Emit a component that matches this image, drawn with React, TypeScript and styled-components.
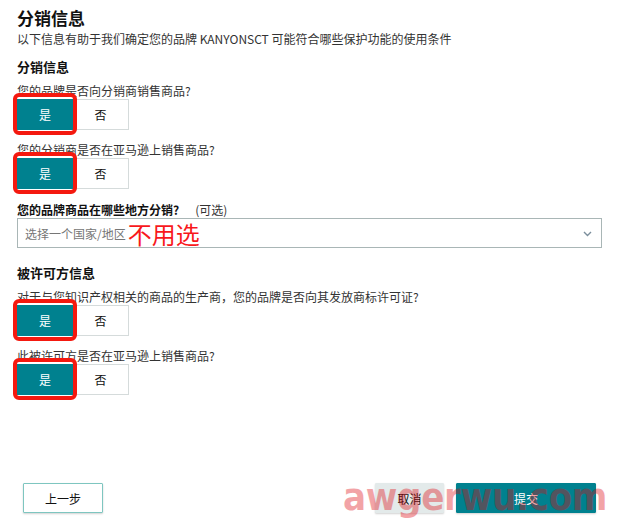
import React from "react";
import styled, { createGlobalStyle } from "styled-components";

const Global = createGlobalStyle`
  html, body { margin: 0; padding: 0; background: #fff; }
  body { font-family: "Noto Sans CJK SC", "Noto Sans", sans-serif; color: #111; }
`;

const Page = styled.div`
  position: relative;
  width: 620px;
  height: 529px;
  box-sizing: border-box;
  display: flex;
  flex-direction: column;
  padding: 7px 18px 0 17px;
`;

const Title = styled.h1`
  margin: 0;
  font-size: 17px;
  line-height: 22px;
  font-weight: 700;
  color: #111;
`;

const Subtitle = styled.p`
  margin: 2px 0 0;
  font-size: 12px;
  line-height: 16px;
  color: #333;
`;

const SectionHeading = styled.h2<{ $top: number }>`
  margin: ${(p) => p.$top}px 0 0;
  font-size: 13px;
  line-height: 18px;
  font-weight: 700;
  color: #111;
`;

const Question = styled.div<{ $top: number }>`
  margin-top: ${(p) => p.$top}px;
  font-size: 12px;
  line-height: 16px;
  color: #333;
`;

const Toggle = styled.div`
  display: flex;
  width: 112px;
`;

const ToggleButton = styled.div<{ $active?: boolean; $marked?: boolean }>`
  position: relative;
  width: 56px;
  height: 31px;
  box-sizing: border-box;
  display: flex;
  align-items: center;
  justify-content: center;
  font-size: 12px;
  background: ${(p) => (p.$active ? "#00818f" : "#fff")};
  color: ${(p) => (p.$active ? "#fff" : "#111")};
  border: 1px solid ${(p) => (p.$active ? "#00818f" : "#d5dbdb")};
  border-left-width: ${(p) => (p.$active ? 1 : 0)}px;
  z-index: ${(p) => (p.$marked ? 2 : 1)};
  &::after {
    content: "";
    display: ${(p) => (p.$marked ? "block" : "none")};
    position: absolute;
    top: -7px;
    left: -5px;
    right: -5px;
    bottom: -6px;
    border: 4px solid #f4190f;
    border-radius: 6px;
  }
`;

const Label = styled.div`
  margin-top: 13px;
  font-size: 12px;
  line-height: 16px;
  color: #111;
  display: flex;
  gap: 16px;
`;

const LabelMain = styled.span`
  font-weight: 700;
`;

const LabelNote = styled.span`
  color: #333;
`;

const Select = styled.div`
  position: relative;
  height: 30px;
  box-sizing: border-box;
  border: 1px solid #a9b6b6;
  display: flex;
  align-items: center;
  padding: 0 7px;
  gap: 2px;
`;

const Placeholder = styled.span`
  font-size: 12px;
  color: #767676;
`;

const Note = styled.span`
  font-size: 24px;
  line-height: 24px;
  color: #f8181c;
  margin-top: 1px;
`;

const Chevron = styled.svg`
  position: absolute;
  right: 9px;
  top: 12px;
`;

const Footer = styled.div`
  margin-top: auto;
  margin-left: 6px;
  margin-right: 6px;
  margin-bottom: 16px;
  display: flex;
  align-items: center;
  gap: 12px;
`;

const Spacer = styled.div`
  flex: 1;
`;

const FooterButton = styled.button<{ $variant: "outline" | "gray" | "primary"; $w: number }>`
  width: ${(p) => p.$w}px;
  height: 30px;
  box-sizing: border-box;
  font-family: inherit;
  font-size: 12px;
  padding: 0;
  border-radius: 1px;
  cursor: pointer;
  box-shadow: 0 1px 2px rgba(0, 0, 0, 0.18);
  ${(p) =>
    p.$variant === "outline"
      ? "background:#fff;color:#111;border:1px solid #7ec6c0;"
      : p.$variant === "gray"
      ? "background:#e3eaea;color:#111;border:1px solid #e3eaea;"
      : "background:#00818f;color:#fff;border:1px solid #00818f;"}
`;

const Watermark = styled.div`
  position: absolute;
  left: 343px;
  top: 477px;
  font-family: "DejaVu Sans Condensed", "DejaVu Sans", sans-serif;
  font-stretch: condensed;
  font-weight: 700;
  font-size: 38px;
  line-height: 40px;
  color: rgb(222, 8, 16);
  opacity: 0.37;
  letter-spacing: -0.3px;
  pointer-events: none;
  z-index: 5;
`;

const YesNo: React.FC = () => (
  <Toggle>
    <ToggleButton $active $marked>
      是
    </ToggleButton>
    <ToggleButton>否</ToggleButton>
  </Toggle>
);

export default function App() {
  return (
    <>
      <Global />
      <Page>
        <Title>分销信息</Title>
        <Subtitle>以下信息有助于我们确定您的品牌 KANYONSCT 可能符合哪些保护功能的使用条件</Subtitle>

        <SectionHeading $top={11}>分销信息</SectionHeading>
        <Question $top={7}>您的品牌是否向分销商销售商品?</Question>
        <YesNo />
        <Question $top={12}>您的分销商是否在亚马逊上销售商品?</Question>
        <YesNo />

        <Label>
          <LabelMain>您的品牌商品在哪些地方分销?</LabelMain>
          <LabelNote>(可选)</LabelNote>
        </Label>
        <Select>
          <Placeholder>选择一个国家/地区</Placeholder>
          <Note>不用选</Note>
          <Chevron width="9" height="6" viewBox="0 0 9 6">
            <path d="M1 1 L4.5 4.5 L8 1" fill="none" stroke="#7b8e9c" strokeWidth="1.4" />
          </Chevron>
        </Select>

        <SectionHeading $top={16}>被许可方信息</SectionHeading>
        <Question $top={7}>对于与您知识产权相关的商品的生产商，您的品牌是否向其发放商标许可证?</Question>
        <YesNo />
        <Question $top={12}>此被许可方是否在亚马逊上销售商品?</Question>
        <YesNo />

        <Footer>
          <FooterButton $variant="outline" $w={80}>上一步</FooterButton>
          <Spacer />
          <FooterButton $variant="gray" $w={69}>取消</FooterButton>
          <FooterButton $variant="primary" $w={140}>提交</FooterButton>
        </Footer>
        <Watermark>awgerwu.com</Watermark>
      </Page>
    </>
  );
}
